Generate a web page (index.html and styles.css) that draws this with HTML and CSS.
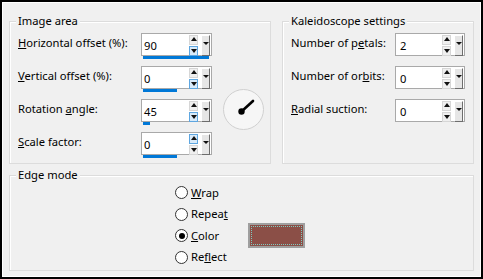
FILE: index.html
```html
<!DOCTYPE html>
<html>
<head>
<meta charset="utf-8">
<link rel="stylesheet" href="styles.css">
</head>
<body>
<div class="window">
  <div class="top-row">
    <div class="group image-area">
      <div class="group-title">Image area</div>
      <div class="form-grid image-grid">
        <div class="label"><u>H</u>orizontal offset (%):</div>
        <div class="spin">
          <div class="spin-top">
            <div class="spin-val">90</div>
            <div class="spin-arrows"><span class="arr up"></span><span class="arr down hot"></span></div>
            <div class="spin-drop"><span class="tri"></span></div>
          </div>
          <div class="spin-bar"><div class="bar-fill" style="width:66px"></div></div>
        </div>
        <div class="label"><u>V</u>ertical offset (%):</div>
        <div class="spin">
          <div class="spin-top">
            <div class="spin-val">0</div>
            <div class="spin-arrows"><span class="arr up"></span><span class="arr down hot"></span></div>
            <div class="spin-drop"><span class="tri"></span></div>
          </div>
          <div class="spin-bar"><div class="bar-fill" style="width:34px"></div></div>
        </div>
        <div class="label">Rotation <u>a</u>ngle:</div>
        <div class="spin">
          <div class="spin-top">
            <div class="spin-val">45</div>
            <div class="spin-arrows"><span class="arr up"></span><span class="arr down hot"></span></div>
            <div class="spin-drop"><span class="tri"></span></div>
          </div>
          <div class="spin-bar"><div class="bar-fill" style="width:7px"></div></div>
        </div>
        <div class="label"><u>S</u>cale factor:</div>
        <div class="spin">
          <div class="spin-top">
            <div class="spin-val">0</div>
            <div class="spin-arrows"><span class="arr up hot"></span><span class="arr down"></span></div>
            <div class="spin-drop"><span class="tri"></span></div>
          </div>
          <div class="spin-bar"><div class="bar-fill" style="width:34px"></div></div>
        </div>
        <div class="dial">
          <svg width="41" height="41" viewBox="0 0 41 41">
            <circle cx="20.5" cy="20.5" r="20" fill="#f6f6f6" stroke="#d0d0d0" stroke-width="1"/>
            <line x1="18.5" y1="22.5" x2="30" y2="12" stroke="#000" stroke-width="2.6" stroke-linecap="round"/>
            <circle cx="18.5" cy="22.5" r="3.2" fill="#000"/>
          </svg>
        </div>
      </div>
    </div>
    <div class="group kaleido">
      <div class="group-title">Kaleidoscope settings</div>
      <div class="form-grid kaleido-grid">
        <div class="label">Number of p<u>e</u>tals:</div>
        <div class="spin plain">
          <div class="spin-top">
            <div class="spin-val">2</div>
            <div class="spin-arrows"><span class="arr up"></span><span class="arr down"></span></div>
            <div class="spin-drop"><span class="tri"></span></div>
          </div>
        </div>
        <div class="label">Number of or<u>b</u>its:</div>
        <div class="spin plain">
          <div class="spin-top">
            <div class="spin-val">0</div>
            <div class="spin-arrows"><span class="arr up"></span><span class="arr down"></span></div>
            <div class="spin-drop"><span class="tri"></span></div>
          </div>
        </div>
        <div class="label"><u>R</u>adial suction:</div>
        <div class="spin plain">
          <div class="spin-top">
            <div class="spin-val">0</div>
            <div class="spin-arrows"><span class="arr up"></span><span class="arr down"></span></div>
            <div class="spin-drop"><span class="tri"></span></div>
          </div>
        </div>
      </div>
    </div>
  </div>
  <div class="group edge">
    <div class="group-title">Edge mode</div>
    <div class="edge-grid">
      <div class="radio"><span class="dot"></span><span><u>W</u>rap</span></div>
      <div class="radio r2"><span class="dot"></span><span>Repea<u>t</u></span></div>
      <div class="radio r3"><span class="dot on"></span><span><u>C</u>olor</span></div>
      <div class="radio r4"><span class="dot"></span><span>Re<u>f</u>lect</span></div>
      <div class="swatch"><div class="swatch-inner"></div></div>
    </div>
  </div>
</div>
</body>
</html>
```

FILE: styles.css
```css
html, body {
  margin: 0;
  padding: 0;
  background: #f0f0f0;
}
body {
  font-family: "Noto Sans", "Open Sans", sans-serif;
  font-size: 11.2px;
  color: #000;
}
.window {
  width: 483px;
  height: 279px;
  box-sizing: border-box;
  border: 2px solid #000;
  box-shadow: inset 0 0 0 1px #fff;
  background: #f0f0f0;
  padding: 19px 0 0 7px;
  display: flex;
  flex-direction: column;
  gap: 11px;
}
.top-row {
  display: flex;
  gap: 11px;
}
.group {
  box-sizing: border-box;
  border: 1px solid #dcdcdc;
  box-shadow: inset 1px 1px 0 #fff;
}
.image-area {
  width: 262px;
  height: 143px;
}
.kaleido {
  width: 192px;
  height: 143px;
}
.edge {
  width: 465px;
  height: 96px;
}
.group-title {
  display: table;
  margin: -9px 0 0 6px;
  padding: 0 2px;
  line-height: 16px;
  background: #f0f0f0;
}
.form-grid {
  display: grid;
  grid-auto-rows: 23px;
  row-gap: 10px;
  padding: 4px 0 0 8px;
}
.image-grid {
  grid-template-columns: 123px 71px 1fr;
}
.kaleido-grid {
  grid-template-columns: 104px 70px;
}
.label {
  grid-column: 1;
  align-self: center;
  line-height: 16px;
  margin-top: -3px;
  white-space: nowrap;
}
.spin {
  grid-column: 2;
  box-sizing: border-box;
  height: 23px;
  border: 1px solid #a9a9a9;
  background: #fff;
  display: flex;
  flex-direction: column;
}
.spin-top {
  flex: 1;
  display: flex;
  padding: 1px 1px 0 0;
}
.spin.plain .spin-top {
  padding-bottom: 2px;
}
.spin-val {
  flex: 1;
  padding-left: 2px;
  line-height: 20px;
  margin-top: 1px;
}
.spin.plain .spin-val {
  padding-left: 4px;
}
.spin-arrows {
  width: 9px;
  display: flex;
  flex-direction: column;
  gap: 1px;
  margin-right: 3px;
}
.arr {
  flex: 1;
  box-sizing: border-box;
  position: relative;
  background: #efefef;
  border: 1px solid #d6d6d6;
}
.arr.hot {
  background: #d8eaf9;
  border-color: #5ea6e0;
}
.arr::after {
  content: "";
  position: absolute;
  left: 0.5px;
  border-left: 3px solid transparent;
  border-right: 3px solid transparent;
}
.arr.up::after {
  top: 1px;
  border-bottom: 4px solid #111;
}
.arr.down::after {
  top: 2px;
  border-top: 4px solid #111;
}
.spin-drop {
  width: 9px;
  box-sizing: border-box;
  background: #e6e6e6;
  border-top: 1px solid #fff;
  border-left: 1px solid #fff;
  border-right: 1px solid #6d6d6d;
  border-bottom: 1px solid #6d6d6d;
  display: flex;
  justify-content: center;
  padding-top: 6px;
}
.tri {
  width: 0;
  height: 0;
  border-left: 3px solid transparent;
  border-right: 3px solid transparent;
  border-top: 3px solid #111;
}
.spin-bar {
  height: 4px;
  padding: 0 1px 1px 1px;
  box-sizing: border-box;
}
.bar-fill {
  height: 3px;
  background: #0078d7;
}
.dial {
  grid-column: 3;
  grid-row: 2 / 5;
  align-self: center;
  margin: -2px 0 0 11px;
  width: 41px;
  height: 41px;
}
.dial svg {
  display: block;
}
.edge-grid {
  display: grid;
  grid-template-columns: 73px 57px;
  grid-auto-rows: 21px;
  row-gap: 0.5px;
  padding: 0 0 0 165px;
  margin-top: -1px;
}
.radio {
  grid-column: 1;
  display: flex;
  align-items: center;
  gap: 3px;
  line-height: 16px;
  white-space: nowrap;
}
.r2 { grid-row: 2; }
.r3 { grid-row: 3; }
.r4 { grid-row: 4; }
.dot {
  width: 13px;
  height: 13px;
  box-sizing: border-box;
  border-radius: 50%;
  border: 1px solid #333;
  background: #fff;
  position: relative;
  flex: none;
}
.dot.on::after {
  content: "";
  position: absolute;
  left: 2.5px;
  top: 2.5px;
  width: 6px;
  height: 6px;
  border-radius: 50%;
  background: #000;
}
.swatch {
  grid-column: 2;
  grid-row: 3;
  align-self: center;
  width: 57px;
  height: 25px;
  box-sizing: border-box;
  border: 2px solid #9f9f9f;
  background: #8b4f47;
  padding: 1px;
}
.swatch-inner {
  width: 100%;
  height: 100%;
  box-sizing: border-box;
  border: 1px dotted #7fc9c0;
}
```
